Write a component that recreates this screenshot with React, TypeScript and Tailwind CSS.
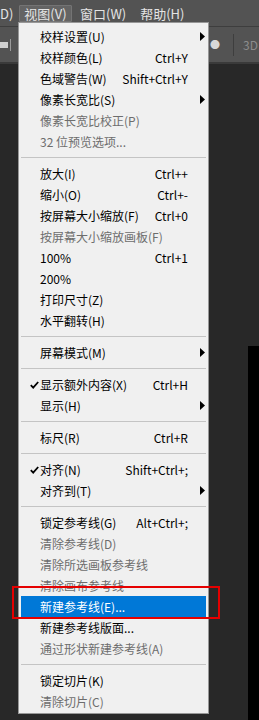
import React from "react";

type Item =
  | { sep: true }
  | {
      sep?: false;
      label: string;
      shortcut?: string;
      sub?: boolean;
      disabled?: boolean;
      check?: boolean;
      active?: boolean;
    };

const items: Item[] = [
  { label: "校样设置(U)", sub: true },
  { label: "校样颜色(L)", shortcut: "Ctrl+Y" },
  { label: "色域警告(W)", shortcut: "Shift+Ctrl+Y" },
  { label: "像素长宽比(S)", sub: true },
  { label: "像素长宽比校正(P)", disabled: true },
  { label: "32 位预览选项...", disabled: true },
  { sep: true },
  { label: "放大(I)", shortcut: "Ctrl++" },
  { label: "缩小(O)", shortcut: "Ctrl+-" },
  { label: "按屏幕大小缩放(F)", shortcut: "Ctrl+0" },
  { label: "按屏幕大小缩放画板(F)", disabled: true },
  { label: "100%", shortcut: "Ctrl+1" },
  { label: "200%" },
  { label: "打印尺寸(Z)" },
  { label: "水平翻转(H)" },
  { sep: true },
  { label: "屏幕模式(M)", sub: true },
  { sep: true },
  { label: "显示额外内容(X)", shortcut: "Ctrl+H", check: true },
  { label: "显示(H)", sub: true },
  { sep: true },
  { label: "标尺(R)", shortcut: "Ctrl+R" },
  { sep: true },
  { label: "对齐(N)", shortcut: "Shift+Ctrl+;", check: true },
  { label: "对齐到(T)", sub: true },
  { sep: true },
  { label: "锁定参考线(G)", shortcut: "Alt+Ctrl+;" },
  { label: "清除参考线(D)", disabled: true },
  { label: "清除所选画板参考线", disabled: true },
  { label: "清除画布参考线", disabled: true },
  { label: "新建参考线(E)...", active: true },
  { label: "新建参考线版面..." },
  { label: "通过形状新建参考线(A)", disabled: true },
  { sep: true },
  { label: "锁定切片(K)" },
  { label: "清除切片(C)", disabled: true },
];

const font = {
  fontFamily: '"Noto Sans CJK SC", "Noto Sans", sans-serif',
};

function Arrow() {
  return (
    <svg width="5" height="9" viewBox="0 0 5 9" className="absolute left-[179px] top-[6px]">
      <path d="M0 0 L5 4.5 L0 9 Z" fill="#000" />
    </svg>
  );
}

function Check() {
  return (
    <svg width="9" height="8" viewBox="0 0 9 8" className="absolute left-[9px] top-[7px]">
      <path d="M0.8 4.2 L3.2 6.6 L8.2 1" stroke="#000" strokeWidth="1.8" fill="none" />
    </svg>
  );
}

export default function App() {
  return (
    <div className="relative w-[259px] h-[720px] overflow-hidden bg-[#282828]" style={font}>
      {/* menubar */}
      <div className="h-[27px] bg-[#535353] border-b border-[#3e3e3e] flex items-center text-[13px] text-[#e4e4e4] leading-none">
        <span className="w-[19px] pl-[0px]">D)</span>
        <span className="ml-[0px] h-[17px] w-[53px] flex items-center justify-center bg-[#646464] border border-[#747474] rounded-[1px]">视图(V)</span>
        <span className="ml-[8px]">窗口(W)</span>
        <span className="ml-[14px]">帮助(H)</span>
      </div>
      {/* options bar */}
      <div className="h-[37px] bg-[#535353] border-b-[2px] border-[#3a3a3a] flex items-center relative">
        <div className="flex items-center gap-[2px] ml-[0px]">
          <div className="w-[8px] h-[6px] bg-[#cfcfcf]" />
          <div className="w-[1px] h-[12px] bg-[#9a9a9a]" />
        </div>
        <div className="ml-auto flex items-center">
          <span className="text-[10px] text-[#d8d8d8] tracking-[1px] mr-[12px]">●●</span>
          <div className="w-[1px] h-[22px] bg-[#3e3e3e]" />
          <span className="ml-[9px] mr-[1px] text-[12px] text-[#8c8c8c]">3D</span>
        </div>
      </div>
      {/* workspace */}
      <div className="flex h-[656px]">
        <div className="flex-1" />
        <div className="w-[11px] mt-[282px] bg-black" />
      </div>

      {/* dropdown menu */}
      <div className="absolute left-[18px] top-[22px] w-[191px] bg-[#f0f0f0] border border-[#979797] pt-[3px] pb-[1px] text-[12px] leading-none">
        {items.map((it, i) =>
          it.sep ? (
            <div key={i} className="h-[11px] flex items-center px-[2px]">
              <div className="h-[1px] w-full bg-[#c4c4c4]" />
            </div>
          ) : (
            <div
              key={i}
              className={
                "relative h-[21px] flex items-center pl-[19px] pr-[18px] mx-[2px] " +
                (it.active ? "bg-[#0078d7] text-white" : it.disabled ? "text-[#6d6d6d]" : "text-black")
              }
            >
              {it.check && <Check />}
              <span className="whitespace-nowrap">{it.label}</span>
              {it.shortcut && <span className="ml-auto whitespace-nowrap">{it.shortcut}</span>}
              {it.sub && <Arrow />}
            </div>
          )
        )}
      </div>

      {/* red annotation box */}
      <div className="absolute left-[12px] top-[586px] w-[208px] h-[33px] border-2 border-[#e50000]" />
    </div>
  );
}
